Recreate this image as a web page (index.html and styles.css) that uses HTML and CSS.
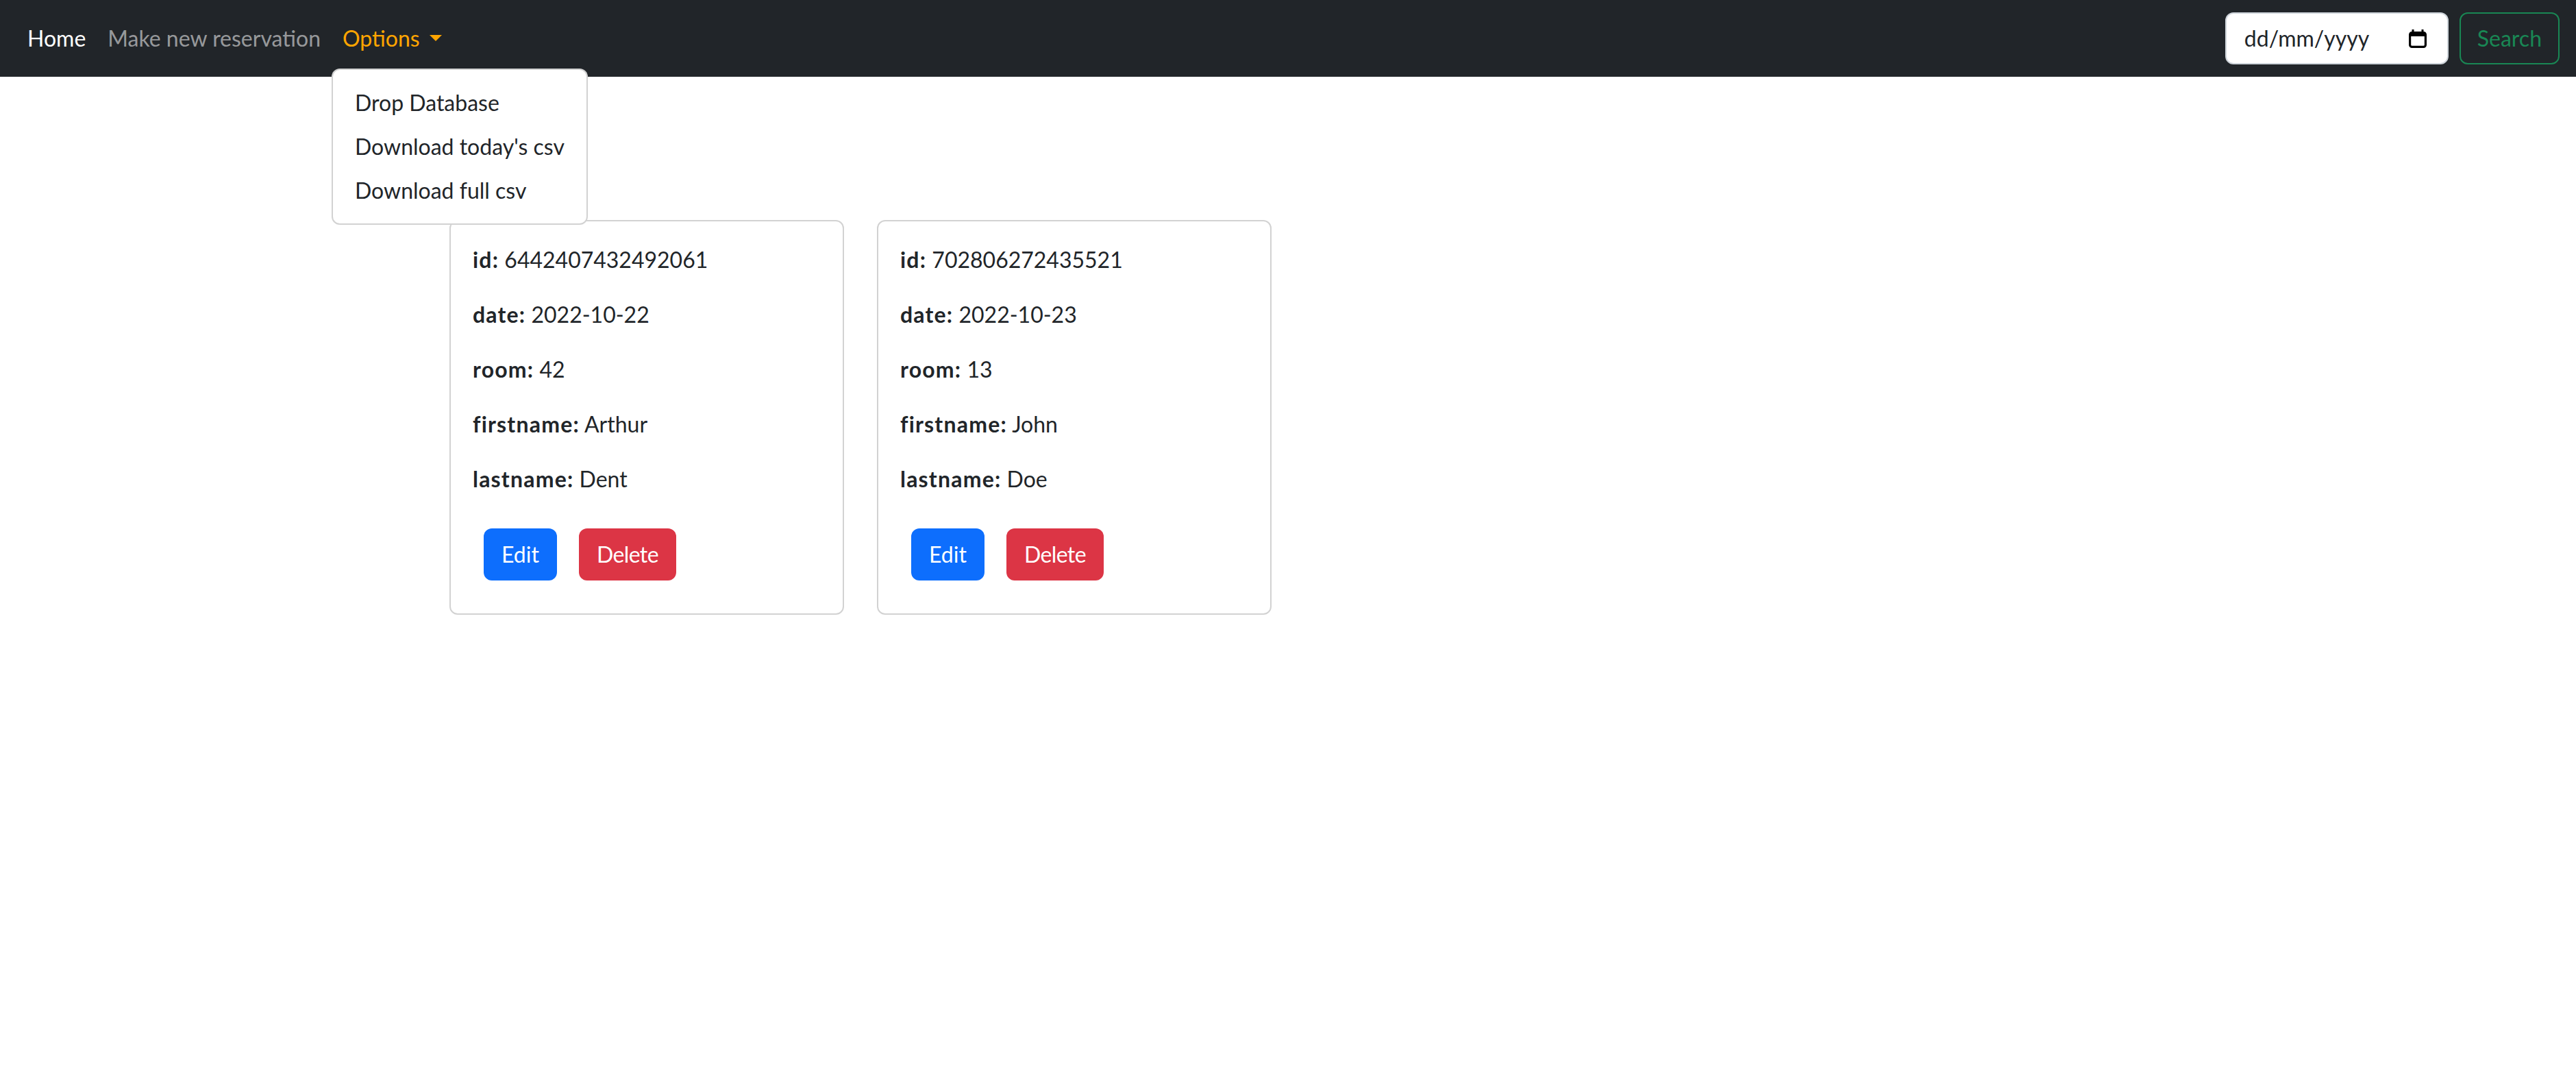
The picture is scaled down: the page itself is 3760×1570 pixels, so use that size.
FILE: index.html
```html
<!DOCTYPE html>
<html lang="en">
<head>
    <meta charset="UTF-8">
    <meta name="viewport" content="width=device-width, initial-scale=1.0">
    <title>Reservations</title>
    <link rel="stylesheet" href="styles.css">
</head>
<body>
    <nav class="navbar">
        <ul class="nav-links">
            <li><a class="nav-link active" href="#">Home</a></li>
            <li><a class="nav-link" href="#">Make new reservation</a></li>
            <li class="dropdown">
                <a class="nav-link options-toggle" href="#">Options</a>
                <ul class="dropdown-menu">
                    <li><a class="dropdown-item" href="#">Drop Database</a></li>
                    <li><a class="dropdown-item" href="#">Download today's csv</a></li>
                    <li><a class="dropdown-item" href="#">Download full csv</a></li>
                </ul>
            </li>
        </ul>

        <form class="search-form">
            <div class="date-field">
                <span>dd/mm/yyyy</span>
                <svg class="calendar-icon" width="26" height="27" viewBox="0 0 26 27">
                    <rect x="4.5" y="0" width="3" height="5" fill="#000"/>
                    <rect x="18.5" y="0" width="3" height="5" fill="#000"/>
                    <rect x="1.6" y="4.6" width="22.8" height="20.8" rx="3" fill="none" stroke="#000" stroke-width="3.2"/>
                    <rect x="1.6" y="4.6" width="22.8" height="5.4" fill="#000"/>
                </svg>
            </div>
            <button class="btn-search" type="button">Search</button>
        </form>
    </nav>

    <main class="reservations">
        <div class="card">
            <p><strong>id:</strong> 6442407432492061</p>
            <p><strong>date:</strong> 2022-10-22</p>
            <p><strong>room:</strong> 42</p>
            <p><strong>firstname:</strong> Arthur</p>
            <p><strong>lastname:</strong> Dent</p>
            <div class="card-actions">
                <button class="btn btn-edit">Edit</button>
                <button class="btn btn-delete">Delete</button>
            </div>
        </div>
        <div class="card">
            <p><strong>id:</strong> 702806272435521</p>
            <p><strong>date:</strong> 2022-10-23</p>
            <p><strong>room:</strong> 13</p>
            <p><strong>firstname:</strong> John</p>
            <p><strong>lastname:</strong> Doe</p>
            <div class="card-actions">
                <button class="btn btn-edit">Edit</button>
                <button class="btn btn-delete">Delete</button>
            </div>
        </div>
    </main>
</body>
</html>
```

FILE: styles.css
```css
* {
    box-sizing: border-box;
}

body {
    margin: 0;
    font-family: Lato, "Liberation Sans", sans-serif;
    font-size: 32px;
    line-height: 1.5;
    color: #212529;
    background-color: #fff;
}

/* top bar */
.navbar {
    display: flex;
    justify-content: space-between;
    align-items: center;
    padding: 16px 24px;
    background-color: #212529;
}

.nav-links {
    display: flex;
    list-style: none;
    margin: 0;
    padding: 0;
}

.nav-link {
    display: block;
    padding: 16px;
    color: rgba(255, 255, 255, 0.55);
    text-decoration: none;
}

.nav-link.active {
    color: #fff;
}

.options-toggle {
    color: #ffa500;
}

.options-toggle::after {
    content: "";
    display: inline-block;
    margin-left: 14px;
    vertical-align: 8px;
    border-top: 9.6px solid;
    border-right: 9.6px solid transparent;
    border-left: 9.6px solid transparent;
}

.dropdown {
    position: relative;
}

.dropdown-menu {
    position: absolute;
    top: 100%;
    left: 0;
    z-index: 10;
    min-width: 372px;
    margin: 4px 0 0;
    padding: 16px 0;
    list-style: none;
    background-color: #fff;
    border: 2px solid rgba(0, 0, 0, 0.175);
    border-radius: 12px;
}

.dropdown-item {
    display: block;
    padding: 8px 32px;
    color: #212529;
    text-decoration: none;
    white-space: nowrap;
}

.search-form {
    display: flex;
    align-items: center;
}

.date-field {
    display: flex;
    align-items: center;
    width: 326px;
    height: 76px;
    margin-right: 16px;
    padding: 12px 30px 12px 26px;
    background-color: #fff;
    border: 2px solid #ced4da;
    border-radius: 12px;
    color: #212529;
}

.calendar-icon {
    margin-left: auto;
}

.btn-search {
    height: 76px;
    padding: 12px 24px;
    font-family: inherit;
    font-size: 32px;
    line-height: 48px;
    color: #198754;
    background-color: transparent;
    border: 2px solid #198754;
    border-radius: 12px;
}

/* reservation cards */
.reservations {
    display: flex;
    gap: 48px;
    padding: 209px 0 0 656px;
}

.card {
    width: 576px;
    padding: 32px;
    border: 2px solid rgba(0, 0, 0, 0.175);
    border-radius: 12px;
}

.card p {
    margin: 0 0 32px;
}

.card strong {
    font-weight: 700;
    letter-spacing: 1.2px;
}

.card-actions {
    display: flex;
}

.btn {
    margin: 16px;
    padding: 12px 24px;
    font-family: inherit;
    font-size: 32px;
    line-height: 48px;
    color: #fff;
    border: 2px solid transparent;
    border-radius: 12px;
}

.btn-edit {
    background-color: #0d6efd;
}

.btn-delete {
    background-color: #dc3545;
    letter-spacing: -0.6px;
}
```
